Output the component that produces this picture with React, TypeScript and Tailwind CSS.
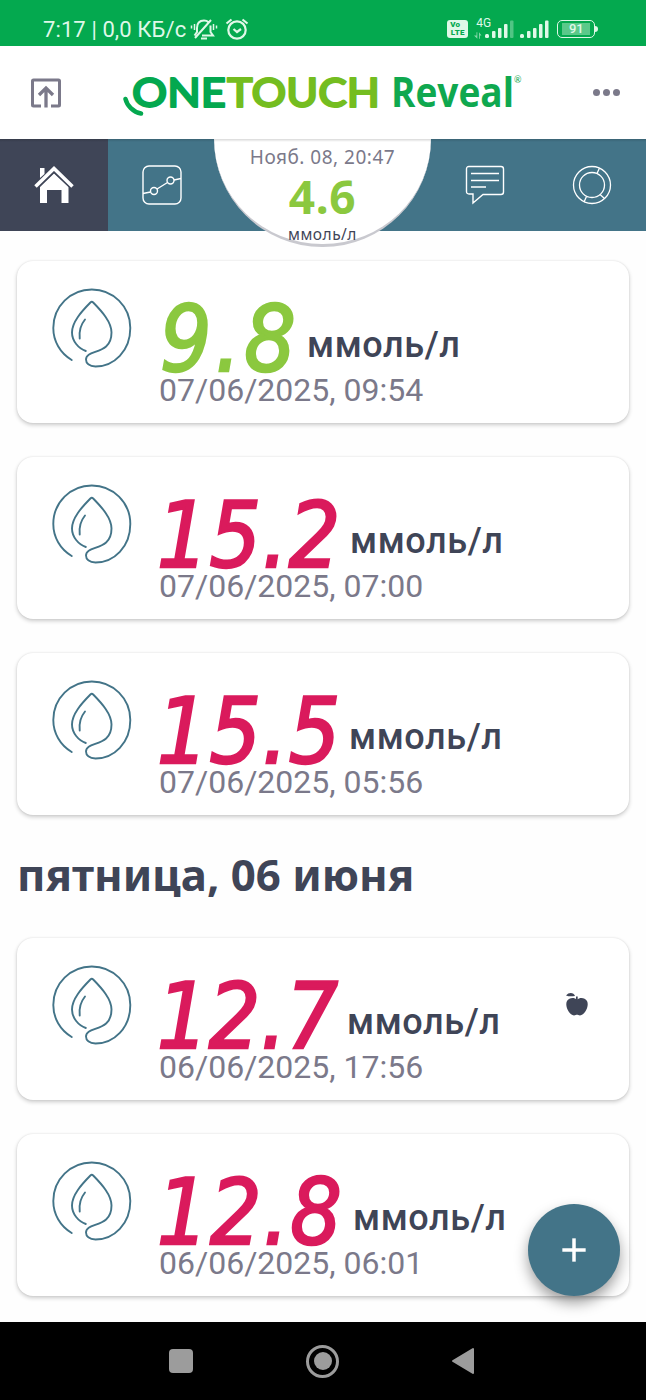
import { Plus } from 'lucide-react';

type Reading = {
  value: string;
  date: string;
  width: string;
  inRange?: boolean;
  meal?: boolean;
};

const saturday: Reading[] = [
  { value: '9.8', date: '07/06/2025, 09:54', width: 'w-[147px] tracking-[3.5px]', inRange: true },
  { value: '15.2', date: '07/06/2025, 07:00', width: 'w-[190px] tracking-[1px]' },
  { value: '15.5', date: '07/06/2025, 05:56', width: 'w-[189px] tracking-[1px]' },
];

const friday: Reading[] = [
  { value: '12.7', date: '06/06/2025, 17:56', width: 'w-[187px] tracking-[0.3px]', meal: true },
  { value: '12.8', date: '06/06/2025, 06:01', width: 'w-[193px] tracking-[1.5px]' },
];

function StatusBar() {
  return (
    <div className="flex h-[46px] items-center bg-[#04a94f] pt-3 pl-[43px] font-['Roboto',sans-serif] text-[#dff8e8]">
      <span className="pt-px text-[22px] leading-6 tracking-[0.1px] whitespace-pre">7:17 | 0,0 КБ/с</span>
      <svg className="ml-1 h-6 w-7" viewBox="0 0 28 24" fill="none" stroke="currentColor" strokeWidth="2">
        <path d="M7 15.500V11C7 6 10 3.500 14 3.500C16 3.500 17.500 4.200 18.500 5.200M20.500 8.500V15L23 18.500H12M4.500 18.500L7 15M5 21L21 3" />
        <path d="M4.500 7V13M1.500 8.500V11.500M23.500 7V13M26.500 8.500V11.500" strokeWidth="1.5" />
        <path d="M11 21.500H17" />
      </svg>
      <svg className="ml-[7px] h-6 w-6" viewBox="0 0 24 24" fill="none" stroke="currentColor" strokeWidth="2.2">
        <circle cx="12" cy="13" r="8.700" />
        <path d="M1.500 6.500L6.500 2.500M22.500 6.500L17.500 2.500M8.500 12L12 15L16 12" />
      </svg>
      <div className="ml-[198px] flex h-[18px] w-[21px] flex-col items-center justify-center rounded-[3px] bg-[#dff8e8] text-[8px] leading-[8px] font-black text-[#04a94f]">
        <span className="self-start pl-[3px]">Vo</span>
        <span className="tracking-[0.3px]">LTE</span>
      </div>
      <div className="ml-[6px] flex h-6 w-[11px] flex-col justify-between pb-[2px]">
        <span className="pl-[2px] text-[12px] leading-[13px]">4G</span>
        <svg className="h-[7px] w-[10px] opacity-60" viewBox="0 0 12 8" fill="currentColor">
          <path d="M0 4L4 8V0H3V4ZM6 8V0L9 4H7V8Z" />
        </svg>
      </div>
      <SignalBars weak />
      <SignalBars />
      <div className="ml-[7px] flex items-center">
        <div className="flex h-[18px] w-[38px] items-center justify-center rounded-[5px] border-[1.5px] border-[#dff8e8] p-[2px]">
          <span className="w-[28px] bg-[#5bc98a] text-center text-[13px] leading-[12px] font-medium">91</span>
        </div>
        <div className="h-[6px] w-[3px] rounded-r bg-[#dff8e8]" />
      </div>
    </div>
  );
}

function SignalBars({ weak = false }: { weak?: boolean }) {
  return (
    <svg className={weak ? 'h-5 w-[30px]' : 'ml-[5px] h-5 w-[30px]'} viewBox="0 0 30 20" fill="currentColor">
      <rect x="0" y="15" width="4" height="4" rx="1.500" />
      <rect x="7" y="12" width="3.500" height="7" rx="1" />
      <rect x="13" y="9" width="3.500" height="10" rx="1" />
      <rect x="19" y="5" width="3.500" height="14" rx="1" />
      <rect x="25" y="1.500" width="3.500" height="17.500" rx="1" opacity={weak ? 0.35 : 1} />
    </svg>
  );
}

function Logo() {
  return (
    <svg
      className="h-[76px] w-[402px] font-['Lato',sans-serif]"
      viewBox="0 0 402 76"
      strokeLinejoin="round"
    >
      <g fontSize="40.500" fontWeight="600" strokeWidth="1.800">
        <text x="9" y="51.500" textLength="94" lengthAdjust="spacingAndGlyphs" fill="#04a84f" stroke="#04a84f">ONE</text>
        <text x="104" y="51.500" textLength="153" lengthAdjust="spacingAndGlyphs" fill="#74bd20" stroke="#74bd20">TOUCH</text>
      </g>
      <text x="268" y="51.500" fontSize="41" fontWeight="700" className="font-['Open_Sans',sans-serif]" textLength="123" lengthAdjust="spacingAndGlyphs" fill="#0fa84f">Reveal</text>
      <text x="391" y="28" fontSize="9" fill="#0fa84f">®</text>
      <path d="M2.500 44C4 50.500 10 57 18 58.500" fill="none" stroke="#04a84f" strokeWidth="4.500" strokeLinecap="round" />
    </svg>
  );
}

function Header() {
  return (
    <header className="flex h-[93px] items-center bg-white pr-[26px] pl-[30px]">
      <svg className="h-8 w-8" viewBox="0 0 32 32" fill="none" stroke="#7b798a" strokeWidth="3">
        <path d="M11 29H3.500Q2.500 29 2.500 28V4Q2.500 3 3.500 3H28.500Q29.500 3 29.500 4V28Q29.500 29 28.500 29H21" />
        <path d="M16 30.500V11M9 18L16 11L23 18" strokeWidth="3.300" />
      </svg>
      <div className="ml-[61px]">
        <Logo />
      </div>
      <div className="ml-auto flex gap-[3px]">
        <span className="h-[7px] w-[7px] rounded-full bg-[#7b798a]" />
        <span className="h-[7px] w-[7px] rounded-full bg-[#7b798a]" />
        <span className="h-[7px] w-[7px] rounded-full bg-[#7b798a]" />
      </div>
    </header>
  );
}

function NavTabs() {
  return (
    <nav className="relative flex h-[92px] bg-[#437488] text-white">
      <div className="flex w-[108px] items-center justify-center bg-[#3f4557]">
        <svg className="h-10 w-10" viewBox="0 0 40 40" fill="currentColor">
          <path d="M6 22L20 8.500L34.500 22V38H27.500V25H13V38H6Z" />
          <path d="M1.500 21.500L20 3.500L38.500 21.500" fill="none" stroke="#3f4557" strokeWidth="6" />
          <path d="M1.500 21.500L20 3.500L38.500 21.500" fill="none" stroke="currentColor" strokeWidth="3.500" />
          <path d="M6 3H10.500V9L6 13Z" />
        </svg>
      </div>
      <div className="flex w-[107px] items-center justify-center">
        <svg className="h-10 w-10" viewBox="0 0 40 40" fill="none" stroke="currentColor" strokeWidth="1.400">
          <rect x="1" y="1" width="38" height="38" rx="6" />
          <circle cx="12" cy="26" r="3.500" />
          <circle cx="28.500" cy="15.500" r="3.500" />
          <path d="M1 28.500L8.500 27M15 24L25.500 17.500M32 15L39 13.500" />
        </svg>
      </div>
      <div className="w-[216px]" />
      <div className="flex w-[107px] items-center justify-center">
        <svg className="h-10 w-10" viewBox="0 0 40 40" fill="none" stroke="currentColor" strokeWidth="1.400">
          <path d="M4 1.500H36Q38.500 1.500 38.500 4V27Q38.500 29.500 36 29.500H18L8 38V29H4Q1.500 29 1.500 26.500V4Q1.500 1.500 4 1.500ZM6 8.500H34M6 15.500H34M6 22H21" />
        </svg>
      </div>
      <div className="flex w-[108px] items-center justify-center">
        <svg className="h-10 w-10" viewBox="0 0 40 40" fill="none" stroke="currentColor" strokeWidth="1.300">
          <circle cx="20" cy="20" r="18.500" />
          <circle cx="20" cy="20" r="12.500" />
          <path d="M25 8.500L27.500 3M14.500 31.500L12 37M28 29.500L32.500 33.500" />
        </svg>
      </div>

      {/* latest reading, hangs below the tab bar */}
      <div className="absolute top-0 left-[214px] flex h-[108px] w-[217px] flex-col items-center rounded-b-full border-b-[3px] border-[#c9c9cf] bg-white font-['Noto_Sans',sans-serif]">
        <span className="mt-[6px] text-[19px] leading-6 tracking-[0.5px] whitespace-nowrap text-[#7b798a]">Нояб. 08, 20:47</span>
        <span className="mt-[3px] text-[46px] leading-[48px] font-bold tracking-[0.6px] text-[#8bc83f]">4.6</span>
        <span className="mt-1 text-[15.5px] leading-[20px] tracking-[0.5px] text-[#3f4557]">ммоль/л</span>
      </div>
      <div className="absolute inset-x-0 top-0 h-[3px] bg-gradient-to-b from-black/15 to-transparent" />
    </nav>
  );
}

function DropIcon() {
  return (
    <svg className="h-20 w-20 shrink-0" viewBox="0 0 80 80" fill="none" stroke="#437488" strokeWidth="1.900" strokeLinecap="round">
      <path d="M19.700 72C8 65 1.300 53 1.300 40C1.300 18.500 18.500 1.500 39.800 1.500C61 1.500 78.300 18.500 78.300 40C78.300 63 62 78.500 43.500 78.500C37 78.500 34 75 34 71.500C34 60.500 59.500 68 59.500 44.500C59.500 34 50 23.500 41.200 14.500Q39.800 13.200 38.400 14.500C29.500 23.500 20 34 20 44.500C20 53 26.500 60.500 33.800 63" />
      <path d="M33 31.500C28.500 37 27 44 27.700 50.500" />
    </svg>
  );
}

function AppleIcon() {
  return (
    <svg className="h-6 w-6" viewBox="0 0 24 24" fill="#3f4557">
      <path d="M1 3.500C4-.5 9 .5 10 4C6 4.500 4 4.500 1 3.500ZM11 4.500H12.700V8H11Z" />
      <path d="M12 7.500C15 5 20 5.500 22 9C24.500 14 20 23 15 23.500C13.500 23.500 13 22.800 12 22.800C11 22.800 10.500 23.500 9 23.500C4 23-.5 14 2 9C4 5.500 9 5 12 7.500Z" />
    </svg>
  );
}

function ReadingCard({ reading }: { reading: Reading }) {
  const color = reading.inRange ? 'text-[#8bc83f]' : 'text-[#da1a5c] -indent-[3px]';

  return (
    <div className="flex h-[162px] rounded-[16px] bg-white pt-[27px] pr-10 pl-[35px] shadow-[0_2px_4px_rgba(0,0,0,0.2),0_0_2px_rgba(0,0,0,0.1)]">
      <DropIcon />
      <div className="ml-[28px] pt-[13px]">
        <div className="flex h-[71px] items-end whitespace-nowrap">
          <span
            className={`${reading.width} ${color} font-['DejaVu_Sans_Condensed','DejaVu_Sans',sans-serif] text-[90px] leading-[64px] italic [-webkit-text-stroke:2.4px_currentColor]`}
          >
            {reading.value}
          </span>
          <span className="pb-[7px] font-['Roboto',sans-serif] text-[36px] leading-10 font-medium tracking-[0.6px] text-[#3f4557]">
            ммоль/л
          </span>
        </div>
        <div className="-ml-px font-['Roboto',sans-serif] text-[32px] leading-9 whitespace-nowrap text-[#7b798a]">
          {reading.date}
        </div>
      </div>
      {reading.meal && (
        <div className="mt-[27px] ml-auto">
          <AppleIcon />
        </div>
      )}
    </div>
  );
}

function SystemNav() {
  return (
    <div className="flex h-[78px] items-center bg-black pl-[169px]">
      <div className="h-6 w-6 rounded-[4px] bg-[#9c9c9c]" />
      <div className="ml-[113px] flex h-[33px] w-[33px] items-center justify-center rounded-full border-[3px] border-[#9c9c9c]">
        <div className="h-[18px] w-[18px] rounded-full bg-[#9c9c9c]" />
      </div>
      <svg className="ml-[112px] h-7 w-6" viewBox="0 0 24 28" fill="#9c9c9c" stroke="#9c9c9c" strokeWidth="2" strokeLinejoin="round">
        <path d="M22 2V26L2 14Z" />
      </svg>
    </div>
  );
}

export default function App() {
  return (
    <div className="relative flex h-[1400px] w-[646px] flex-col overflow-hidden bg-[#fefefe]">
      <StatusBar />
      <Header />
      <NavTabs />
      <main className="flex-1 px-[17px] pt-[30px]">
        <div className="flex flex-col gap-[34px]">
          {saturday.map((reading) => (
            <ReadingCard key={reading.date} reading={reading} />
          ))}
        </div>
        <h2 className="flex h-[123px] items-center pb-[3px] font-['Noto_Sans',sans-serif] text-[43.8px] font-bold whitespace-nowrap text-[#3f4557]">
          пятница, 06 июня
        </h2>
        <div className="flex flex-col gap-[34px]">
          {friday.map((reading) => (
            <ReadingCard key={reading.date} reading={reading} />
          ))}
        </div>
      </main>
      <SystemNav />
      <button className="absolute top-[1204px] left-[528px] flex h-[92px] w-[92px] items-center justify-center rounded-full bg-[#437488] text-white shadow-[0_7px_14px_rgba(0,0,0,0.38)]">
        <Plus size={40} strokeWidth={2.1} strokeLinecap="butt" />
      </button>
    </div>
  );
}
